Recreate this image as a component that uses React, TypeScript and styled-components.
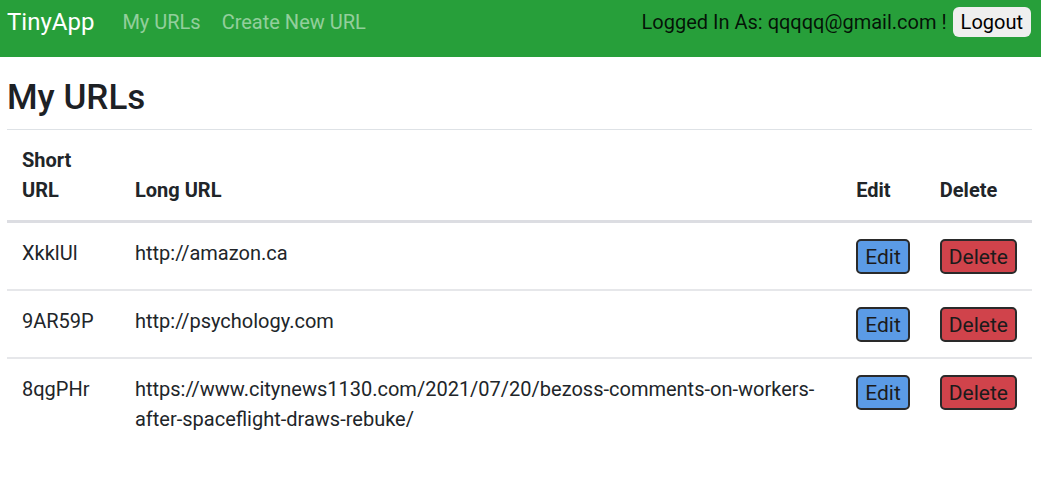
import React from "react";
import styled, { createGlobalStyle } from "styled-components";

const GlobalStyle = createGlobalStyle`
  * {
    box-sizing: border-box;
  }
  body {
    margin: 0;
    font-family: Roboto, "Liberation Sans", sans-serif;
    font-size: 20px;
    line-height: 1.5;
    color: #212529;
    background: #fff;
  }
`;

const Navbar = styled.nav`
  display: flex;
  align-items: center;
  height: 57px;
  padding: 0 10px 13px 7px;
  background-color: #279f3a;
`;

const Brand = styled.a`
  font-size: 24px;
  color: #fff;
  text-decoration: none;
  margin-right: 28px;
`;

const NavLinks = styled.div`
  display: flex;
  gap: 21px;
  flex: 1;
`;

const NavLink = styled.a`
  font-size: 20px;
  color: rgba(255, 255, 255, 0.5);
  text-decoration: none;
`;

const UserInfo = styled.div`
  display: flex;
  align-items: center;
  gap: 6px;
  font-size: 20px;
  color: rgba(0, 0, 0, 0.88);
`;

const LogoutButton = styled.button`
  font-family: inherit;
  font-size: 20px;
  line-height: 24px;
  height: 30px;
  padding: 0 8px;
  border: none;
  border-radius: 6px;
  background: #efefef;
  color: #000;
`;

const Main = styled.main`
  padding: 0 9px 0 7px;
`;

const Title = styled.h1`
  margin: 20px 0 10px;
  font-size: 35px;
  font-weight: 500;
  line-height: 42px;
  color: #1d2125;
`;

const Table = styled.table`
  width: 100%;
  border-collapse: collapse;
  border-top: 1px solid #dee2e6;
`;

const HeadCell = styled.th<{ $width: number }>`
  width: ${(p) => p.$width}px;
  padding: 15px;
  text-align: left;
  vertical-align: bottom;
  font-weight: 700;
  line-height: 30px;
  border-bottom: 3px solid #dcdde2;
`;

const Row = styled.tr`
  border-bottom: 2px solid #e6e7ea;
  &:last-child {
    border-bottom: none;
  }
`;

const Cell = styled.td`
  padding: 15px;
  vertical-align: top;
  line-height: 30px;
`;

const ActionButton = styled.button<{ $color: string }>`
  display: block;
  margin-top: 1px;
  height: 35px;
  padding: 0 7px;
  font-family: inherit;
  font-size: 21px;
  line-height: 24px;
  color: #1b1b1b;
  background-color: ${(p) => p.$color};
  border: 2px solid #2a2a2a;
  border-radius: 5px;
  cursor: pointer;
`;

const urls = [
  { id: "XkklUl", longURL: "http://amazon.ca" },
  { id: "9AR59P", longURL: "http://psychology.com" },
  {
    id: "8qgPHr",
    longURL:
      "https://www.citynews1130.com/2021/07/20/bezoss-comments-on-workers-after-spaceflight-draws-rebuke/",
  },
];

const App = () => {
  return (
    <>
      <GlobalStyle />
      <Navbar>
        <Brand href="#">TinyApp</Brand>
        <NavLinks>
          <NavLink href="#">My URLs</NavLink>
          <NavLink href="#">Create New URL</NavLink>
        </NavLinks>
        <UserInfo>
          <span>Logged In As: qqqqq@gmail.com !</span>
          <LogoutButton>Logout</LogoutButton>
        </UserInfo>
      </Navbar>
      <Main>
        <Title>My URLs</Title>
        <Table>
          <thead>
            <tr>
              <HeadCell $width={113}>Short URL</HeadCell>
              <HeadCell $width={722}>Long URL</HeadCell>
              <HeadCell $width={83}>Edit</HeadCell>
              <HeadCell $width={107}>Delete</HeadCell>
            </tr>
          </thead>
          <tbody>
            {urls.map((item) => (
              <Row key={item.id}>
                <Cell>{item.id}</Cell>
                <Cell>{item.longURL}</Cell>
                <Cell>
                  <ActionButton $color="#5b9be6">Edit</ActionButton>
                </Cell>
                <Cell>
                  <ActionButton $color="#d0434b">Delete</ActionButton>
                </Cell>
              </Row>
            ))}
          </tbody>
        </Table>
      </Main>
    </>
  );
};

export default App;
